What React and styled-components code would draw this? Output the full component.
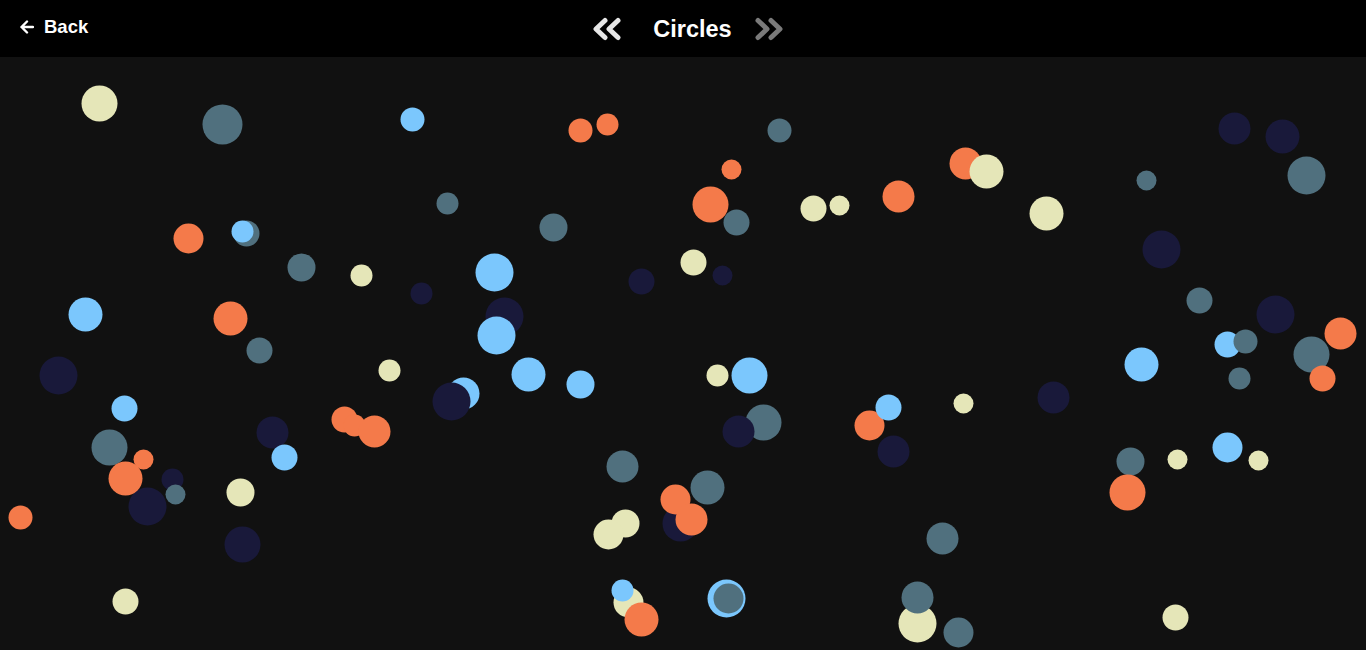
import React from "react";
import styled, { createGlobalStyle } from "styled-components";

const GlobalStyle = createGlobalStyle`
  html, body { margin: 0; padding: 0; background: #111111; overflow: hidden; }
  body { font-family: "Liberation Sans", Arial, sans-serif; }
`;

const Page = styled.div`
  width: 1366px;
  height: 650px;
  display: flex;
  flex-direction: column;
  background: #111111;
`;

const Header = styled.header`
  height: 57px;
  flex: none;
  background: #000;
  display: grid;
  grid-template-columns: 1fr auto 1fr;
  align-items: center;
`;

const BackLink = styled.a`
  justify-self: start;
  display: flex;
  align-items: center;
  gap: 10px;
  padding-left: 20px;
  margin-top: -3px;
  color: #fff;
  font-weight: 700;
  font-size: 18.5px;
  text-decoration: none;
  cursor: pointer;
`;

const TitleGroup = styled.div`
  display: flex;
  align-items: center;
  margin-left: 10px;
`;

const Title = styled.h1`
  margin: 2px 22px 0 31px;
  color: #fff;
  font-size: 23.5px;
  font-weight: 700;
`;

const NavButton = styled.button`
  border: none;
  background: none;
  padding: 0;
  display: flex;
  color: ${(p) => (p.$dim ? "#7a7a7a" : "#e6e6e6")};
  cursor: pointer;
`;

const Canvas = styled.svg`
  display: block;
  flex: 1;
  width: 1366px;
`;

const C = {
  N: "#19193a",
  S: "#50707e",
  P: "#e5e6b8",
  O: "#f47a4a",
  B: "#7bc7fd",
};

const circles = [
  // navy
  ["N", 1234, 128, 16], ["N", 1282, 136, 17], ["N", 1161, 249, 19], ["N", 641, 281, 13],
  ["N", 722, 275, 10], ["N", 421, 293, 11], ["N", 504, 316, 19], ["N", 1275, 314, 19],
  ["N", 58, 375, 19], ["N", 272, 432, 16], ["N", 1053, 397, 16], ["N", 893, 451, 16],
  ["N", 172, 479, 11], ["N", 147, 506, 19], ["N", 242, 544, 18], ["N", 680, 523, 18],
  // slate
  ["S", 222, 124, 20], ["S", 779, 130, 12], ["S", 447, 203, 11], ["S", 553, 227, 14],
  ["S", 736, 222, 13], ["S", 246, 233, 13], ["S", 301, 267, 14], ["S", 1146, 180, 10],
  ["S", 1306, 175, 19], ["S", 1199, 300, 13], ["S", 1311, 354, 18], ["S", 1239, 378, 11],
  ["S", 259, 350, 13], ["S", 109, 447, 18], ["S", 763, 422, 18], ["S", 622, 466, 16],
  ["S", 707, 487, 17], ["S", 1130, 461, 14], ["S", 942, 538, 16], ["S", 958, 632, 15],
  // orange under pale
  ["O", 965, 163, 16],
  // pale
  ["P", 99, 103, 18], ["P", 361, 275, 11], ["P", 693, 262, 13], ["P", 813, 208, 13],
  ["P", 839, 205, 10], ["P", 986, 171, 17], ["P", 1046, 213, 17], ["P", 389, 370, 11],
  ["P", 717, 375, 11], ["P", 963, 403, 10], ["P", 1177, 459, 10], ["P", 1258, 460, 10],
  ["P", 240, 492, 14], ["P", 625, 523, 14], ["P", 608, 534, 15], ["P", 125, 601, 13],
  ["P", 628, 602, 15], ["P", 917, 623, 19], ["P", 1175, 617, 13],
  // orange
  ["O", 580, 130, 12], ["O", 607, 124, 11], ["O", 731, 169, 10], ["O", 710, 204, 18],
  ["O", 898, 196, 16], ["O", 188, 238, 15], ["O", 230, 318, 17], ["O", 344, 419, 13],
  ["O", 354, 425, 11], ["O", 374, 431, 16], ["O", 869, 425, 15], ["O", 143, 459, 10],
  ["O", 125, 478, 17], ["O", 20, 517, 12], ["O", 675, 499, 15], ["O", 691, 519, 16],
  ["O", 641, 619, 17], ["O", 1127, 492, 18], ["O", 1340, 333, 16], ["O", 1322, 378, 13],
  // blue
  ["B", 412, 119, 12], ["B", 242, 231, 11], ["B", 494, 272, 19], ["B", 85, 314, 17],
  ["B", 496, 335, 19], ["B", 528, 374, 17], ["B", 580, 384, 14], ["B", 749, 375, 18],
  ["B", 463, 393, 16], ["B", 124, 408, 13], ["B", 284, 457, 13], ["B", 888, 407, 13],
  ["B", 1141, 364, 17], ["B", 1227, 344, 13], ["B", 1227, 447, 15], ["B", 726, 598, 19],
  ["B", 622, 590, 11],
  // top layer
  ["N", 451, 401, 19], ["N", 738, 431, 16], ["S", 728, 598, 15], ["S", 1245, 341, 12],
  ["S", 917, 597, 16], ["S", 175, 494, 10],
];

const ArrowLeft = () => (
  <svg width="14" height="14" viewBox="0 0 14 14" fill="none" stroke="currentColor"
    strokeWidth="2.4" strokeLinecap="round" strokeLinejoin="round">
    <path d="M13 7H1.5M7 1.5L1.5 7L7 12.5" />
  </svg>
);

const DoubleChevron = ({ dir }) => (
  <svg width="30" height="24" viewBox="0 0 30 24" fill="none" stroke="currentColor"
    strokeWidth="5" strokeLinecap="round" strokeLinejoin="round"
    style={dir === "right" ? { transform: "scaleX(-1)" } : undefined}>
    <polyline points="13,3.5 4,12 13,20.5" />
    <polyline points="26,3.5 17,12 26,20.5" />
  </svg>
);

export default function App() {
  return (
    <>
      <GlobalStyle />
      <Page>
        <Header>
          <BackLink>
            <ArrowLeft />
            Back
          </BackLink>
          <TitleGroup>
            <NavButton aria-label="Previous">
              <DoubleChevron dir="left" />
            </NavButton>
            <Title>Circles</Title>
            <NavButton $dim aria-label="Next">
              <DoubleChevron dir="right" />
            </NavButton>
          </TitleGroup>
          <div />
        </Header>
        <Canvas viewBox="-0.5 56.5 1366 593" preserveAspectRatio="xMinYMin slice">
          {circles.map(([c, x, y, r], i) => (
            <circle key={i} cx={x} cy={y} r={r} fill={C[c]} />
          ))}
        </Canvas>
      </Page>
    </>
  );
}
